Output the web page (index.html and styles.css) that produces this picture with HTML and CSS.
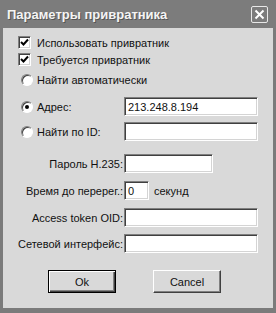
FILE: index.html
```html
<!DOCTYPE html>
<html lang="ru">
<head>
    <meta charset="UTF-8">
    <title>Параметры привратника</title>
    <link rel="stylesheet" href="styles.css">
</head>
<body>
    <div class="window">
        <div class="titlebar">
            <span class="title">Параметры привратника</span>
            <span class="close">
                <svg width="11" height="11" viewBox="0 0 11 11">
                    <path d="M1.5 1.5 L9.5 9.5 M9.5 1.5 L1.5 9.5" stroke="#fff" stroke-width="2" fill="none"/>
                </svg>
            </span>
        </div>

        <div class="content">
            <div class="row check-row r1">
                <span class="checkbox"><svg width="9" height="9" viewBox="0 0 9 9"><path d="M1 4 L3.5 6.5 L8 1.5" stroke="#000" stroke-width="2" fill="none"/></svg></span>
                <span>Использовать привратник</span>
            </div>
            <div class="row check-row r2">
                <span class="checkbox"><svg width="9" height="9" viewBox="0 0 9 9"><path d="M1 4 L3.5 6.5 L8 1.5" stroke="#000" stroke-width="2" fill="none"/></svg></span>
                <span>Требуется привратник</span>
            </div>
            <div class="row radio-row r3">
                <span class="radio"></span>
                <span>Найти автоматически</span>
            </div>
            <div class="row field r4">
                <div class="radio-label"><span class="radio checked"></span><span>Адрес:</span></div>
                <div class="input wide">213.248.8.194</div>
            </div>
            <div class="row field r5">
                <div class="radio-label"><span class="radio"></span><span>Найти по ID:</span></div>
                <div class="input wide"></div>
            </div>
            <div class="row field r6">
                <div class="label">Пароль H.235:</div>
                <div class="input mid"></div>
            </div>
            <div class="row field r7">
                <div class="label">Время до перерег.:</div>
                <div class="input small">0</div>
                <span class="unit">секунд</span>
            </div>
            <div class="row field r8">
                <div class="label">Access token OID:</div>
                <div class="input wide"></div>
            </div>
            <div class="row field r9">
                <div class="label">Сетевой интерфейс:</div>
                <div class="input wide"></div>
            </div>

            <div class="buttons">
                <div class="btn default"><span>Ok</span></div>
                <div class="btn"><span>Cancel</span></div>
            </div>
        </div>
    </div>
</body>
</html>
```

FILE: styles.css
```css
body {
    margin: 0;
    padding: 0;
    font-family: "Liberation Sans", Arial, sans-serif;
    font-size: 11px;
    color: #111;
    background-color: #d8d8d8;
}

.window {
    width: 276px;
    height: 313px;
    box-sizing: border-box;
    border: 3px solid #7b7b7b;
    border-top: 0;
    border-bottom-width: 5px;
    background-color: #d9d9d9;
    display: flex;
    flex-direction: column;
}

.titlebar {
    height: 28px;
    margin: 0 -3px;
    padding: 0 8px 0 7px;
    background-color: #7c7c7c;
    display: flex;
    align-items: center;
    justify-content: space-between;
}

.title {
    color: #f4f4f4;
    font-weight: bold;
    font-size: 13px;
    text-shadow: 1px 1px 0 #555;
    margin-top: 1px;
}

.close {
    width: 15px;
    height: 15px;
    border: 1px solid #e8e8e8;
    border-radius: 2px;
    display: flex;
    align-items: center;
    justify-content: center;
}

.content {
    display: flex;
    flex-direction: column;
}

.row {
    display: flex;
    align-items: center;
}

.check-row {
    height: 17px;
    padding-left: 15px;
    gap: 6px;
}

.radio-row {
    height: 18px;
    padding-left: 18px;
    gap: 4px;
}

.r1 { margin-top: 6px; }
.r2 { margin-top: 0; }
.r3 { margin-top: 3px; }
.r4 { margin-top: 8px; }
.r5 { margin-top: 6px; }
.r6 { margin-top: 13px; }
.r7 { margin-top: 8px; }
.r8 { margin-top: 8px; }
.r9 { margin-top: 7px; }

.checkbox {
    width: 13px;
    height: 13px;
    box-sizing: border-box;
    background-color: #fff;
    border: 1px solid;
    border-color: #808080 #fff #fff #808080;
    box-shadow: inset 1px 1px 0 #404040, inset -1px -1px 0 #d4d4d4;
    display: flex;
    align-items: center;
    justify-content: center;
}

.radio {
    width: 12px;
    height: 12px;
    box-sizing: border-box;
    border-radius: 50%;
    background-color: #fff;
    border: 1px solid;
    border-color: #808080 #fff #fff #808080;
    box-shadow: inset 1px 1px 0 #404040;
    display: flex;
    align-items: center;
    justify-content: center;
}

.radio.checked::after {
    content: "";
    width: 4px;
    height: 4px;
    border-radius: 50%;
    background-color: #000;
}

.field {
    height: 19px;
}

.radio-label {
    width: 121px;
    padding-left: 18px;
    box-sizing: border-box;
    display: flex;
    align-items: center;
    gap: 4px;
}

.label {
    width: 121px;
    padding-right: 1px;
    box-sizing: border-box;
    text-align: right;
}

.input {
    height: 19px;
    box-sizing: border-box;
    background-color: #fff;
    border: 1px solid;
    border-color: #7f7f7f #fff #fff #7f7f7f;
    box-shadow: inset 1px 1px 0 #404040, inset -1px -1px 0 #d4d4d4;
    padding: 2px 0 0 3px;
    line-height: 14px;
}

.input.wide { width: 134px; }
.input.mid { width: 89px; }
.input.small { width: 25px; }

.unit {
    margin-left: 5px;
}

.buttons {
    display: flex;
    gap: 37px;
    padding-left: 45px;
    margin-top: 17px;
}

.btn {
    width: 68px;
    height: 23px;
    box-sizing: border-box;
    border: 1px solid;
    border-color: #fff #404040 #404040 #fff;
    box-shadow: inset -1px -1px 0 #808080;
    background-color: #d9d9d9;
    display: flex;
    align-items: center;
    justify-content: center;
}

.btn.default {
    border: 1px solid #000;
    box-shadow: inset 1px 1px 0 #fff, inset -1px -1px 0 #404040, inset -2px -2px 0 #808080;
}
```
